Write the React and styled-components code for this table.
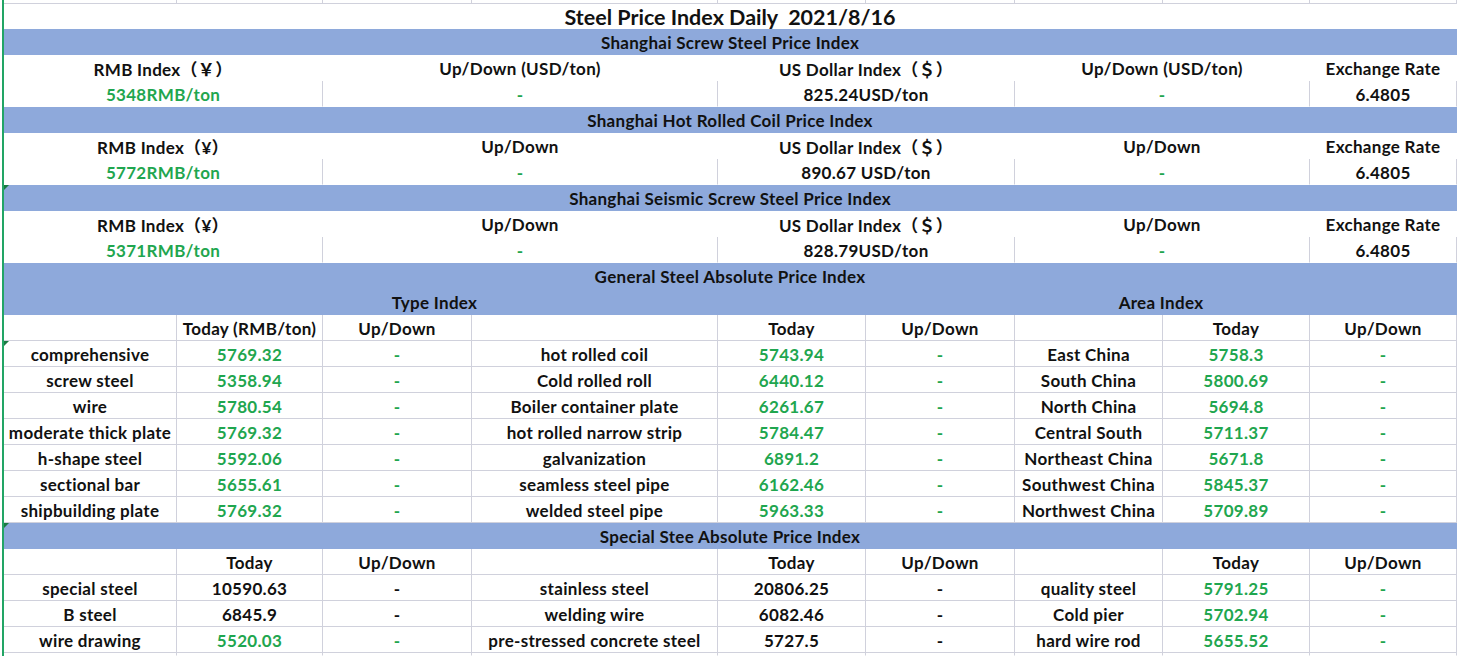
import React from "react";
import styled, { createGlobalStyle, css } from "styled-components";

const GRID = "#d0d1dc";
const BLUE = "#8ea9db";
const GREEN = "#1fa64f";
const INK = "#111111";

const GlobalStyle = createGlobalStyle`
  html, body {
    margin: 0;
    padding: 0;
    background: #ffffff;
  }
  body {
    font-family: Lato, "Noto Sans CJK SC", sans-serif;
  }
`;

const Page = styled.div`
  width: 1462px;
  height: 656px;
  overflow: hidden;
  background: #fff;
  padding-left: 2px;
  box-sizing: border-box;
`;

// the sheet itself, green bar on the left is excel's selection edge
const Sheet = styled.div`
  display: grid;
  grid-template-columns: 173px 146px 149px 246px 148px 149px 148px 147px 147px 1fr;
  grid-template-rows: 4px 25px repeat(24, 26px) 3px;
  border-left: 2px solid #22a565;
  height: 656px;
  box-sizing: border-box;
`;

const Cell = styled.div`
  grid-column: span ${(p) => p.$span || 1};
  box-sizing: border-box;
  display: flex;
  align-items: center;
  justify-content: center;
  position: relative;
  min-width: 0;
  padding-top: 2px;
  background: ${(p) => (p.$blue ? BLUE : "#fff")};
  color: ${(p) => (p.$green ? GREEN : INK)};
  border-right: 1px solid ${(p) => (p.$r ? GRID : "transparent")};
  border-bottom: 1px solid ${(p) => (p.$b ? GRID : "transparent")};
  font-size: 17px;
  letter-spacing: 0.3px;
  font-weight: 700;
  white-space: pre;
  ${(p) =>
    p.$mark &&
    css`
      &::before {
        content: "";
        position: absolute;
        left: 0;
        top: 0;
        border-top: 5px solid #1b7a43;
        border-right: 5px solid transparent;
      }
    `}
`;

const Title = styled(Cell)`
  font-size: 21.5px;
  letter-spacing: 0;
  padding-top: 2px;
`;

const Edge = styled.div`
  box-sizing: border-box;
  border-left: 1px solid ${(p) => (p.$line ? GRID : "transparent")};
  margin-left: -1px;
`;

const shanghai = [
  {
    title: "Shanghai Screw Steel Price Index",
    heads: ["RMB Index（￥）", "Up/Down (USD/ton)", "US Dollar Index（＄）", "Up/Down (USD/ton)", "Exchange Rate"],
    vals: ["5348RMB/ton", "-", "825.24USD/ton", "-", "6.4805"],
  },
  {
    title: "Shanghai Hot Rolled Coil Price Index",
    heads: ["RMB Index（¥）", "Up/Down", "US Dollar Index（＄）", "Up/Down", "Exchange Rate"],
    vals: ["5772RMB/ton", "-", "890.67 USD/ton", "-", "6.4805"],
  },
  {
    title: "Shanghai Seismic Screw Steel Price Index",
    heads: ["RMB Index（¥）", "Up/Down", "US Dollar Index（＄）", "Up/Down", "Exchange Rate"],
    vals: ["5371RMB/ton", "-", "828.79USD/ton", "-", "6.4805"],
    mark: true,
  },
];
const headSpans = [2, 2, 2, 2, 1];
const valGreen = [true, true, false, true, false];

// [label, today, green?, dashGreen?] x3 groups
const general = [
  [["comprehensive", "5769.32"], ["hot rolled coil", "5743.94"], ["East China", "5758.3"]],
  [["screw steel", "5358.94"], ["Cold rolled roll", "6440.12"], ["South China", "5800.69"]],
  [["wire", "5780.54"], ["Boiler container plate", "6261.67"], ["North China", "5694.8"]],
  [["moderate thick plate", "5769.32"], ["hot rolled narrow strip", "5784.47"], ["Central South", "5711.37"]],
  [["h-shape steel", "5592.06"], ["galvanization", "6891.2"], ["Northeast China", "5671.8"]],
  [["sectional bar", "5655.61"], ["seamless steel pipe", "6162.46"], ["Southwest China", "5845.37"]],
  [["shipbuilding plate", "5769.32"], ["welded steel pipe", "5963.33"], ["Northwest China", "5709.89"]],
].map((row) => row.map(([l, v]) => [l, v, true, true]));

const special = [
  [["special steel", "10590.63", false, false], ["stainless steel", "20806.25", false, false], ["quality steel", "5791.25", true, true]],
  [["B steel", "6845.9", false, false], ["welding wire", "6082.46", false, false], ["Cold pier", "5702.94", true, true]],
  [["wire drawing", "5520.03", true, true], ["pre-stressed concrete steel", "5727.5", false, false], ["hard wire rod", "5655.52", true, true]],
];

const Band = ({ children, mark, k }) => [
  <Cell key={k} $span={9} $blue $mark={mark}>
    {children}
  </Cell>,
  <Edge key={k + "e"} $line />,
];

const GridRow = ({ cells, k, mark }) => [
  ...cells.map((c, i) => (
    <Cell key={k + i} $r $b $green={c.green} $mark={mark && i === 0}>
      {c.text}
    </Cell>
  )),
  <Edge key={k + "e"} />,
];

const App = () => {
  const rows = [];

  // partial row above the title
  for (let i = 0; i < 9; i++) rows.push(<Cell key={"top" + i} $r $b />);
  rows.push(<Edge key="tope" />);

  rows.push(
    <Title key="title" $span={9}>
      {"Steel Price Index Daily  2021/8/16"}
    </Title>,
    <Edge key="titlee" />
  );

  shanghai.forEach((s, si) => {
    rows.push(...Band({ children: s.title, mark: s.mark, k: "sb" + si }));
    s.heads.forEach((h, i) =>
      rows.push(
        <Cell key={"sh" + si + i} $span={headSpans[i]}>
          {h}
        </Cell>
      )
    );
    rows.push(<Edge key={"she" + si} />);
    s.vals.forEach((v, i) =>
      rows.push(
        <Cell key={"sv" + si + i} $span={headSpans[i]} $r $green={valGreen[i]}>
          {v}
        </Cell>
      )
    );
    rows.push(<Edge key={"sve" + si} />);
  });

  rows.push(...Band({ children: "General Steel Absolute Price Index", k: "gb" }));
  rows.push(
    <Cell key="gti" $span={5} $blue>
      Type Index
    </Cell>,
    <Cell key="gai" $span={4} $blue>
      Area Index
    </Cell>,
    <Edge key="gie" $line />
  );

  const heads = (first) => [
    { text: "" },
    { text: first },
    { text: "Up/Down" },
    { text: "" },
    { text: "Today" },
    { text: "Up/Down" },
    { text: "" },
    { text: "Today" },
    { text: "Up/Down" },
  ];
  const flat = (row) =>
    row.flatMap(([l, v, g, dg]) => [
      { text: l },
      { text: v, green: g },
      { text: "-", green: dg },
    ]);

  rows.push(...GridRow({ cells: heads("Today (RMB/ton)"), k: "gh" }));
  general.forEach((r, i) => rows.push(...GridRow({ cells: flat(r), k: "g" + i, mark: i === 0 })));

  rows.push(...Band({ children: "Special Stee Absolute Price Index", mark: true, k: "pb" }));
  rows.push(...GridRow({ cells: heads("Today"), k: "ph" }));
  special.forEach((r, i) => rows.push(...GridRow({ cells: flat(r), k: "p" + i })));

  // partial row at the bottom
  for (let i = 0; i < 9; i++) rows.push(<Cell key={"bot" + i} $r />);
  rows.push(<Edge key="bote" />);

  return (
    <Page>
      <GlobalStyle />
      <Sheet>{rows}</Sheet>
    </Page>
  );
};

export default App;
